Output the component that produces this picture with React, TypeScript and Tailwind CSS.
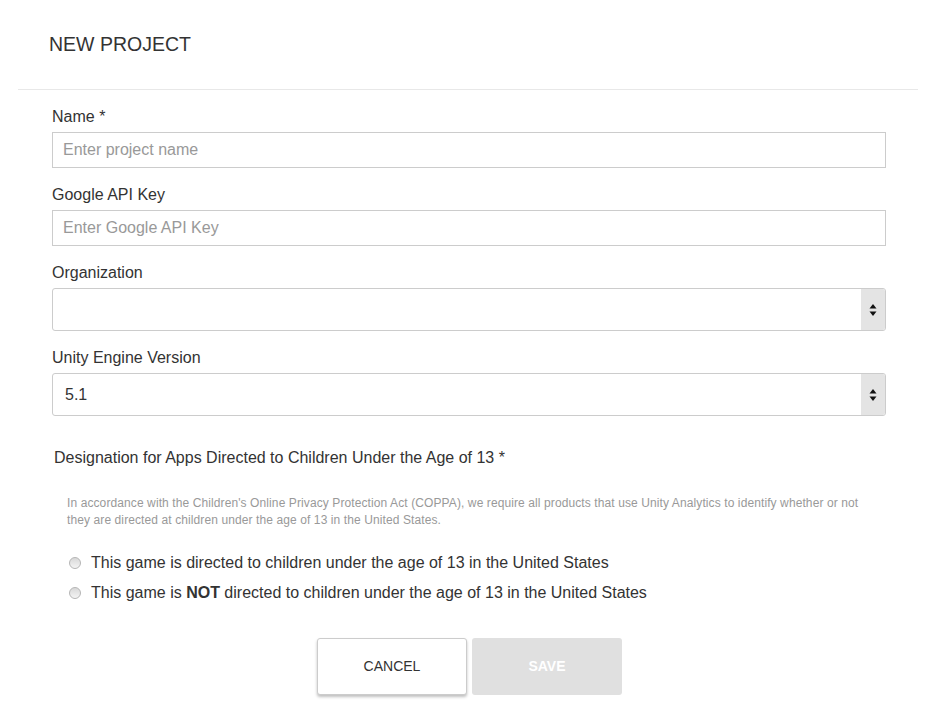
import React from "react";

function SelectBox({ value }: { value?: string }) {
  return (
    <div className="flex h-[43px] w-[834px] items-stretch rounded-[3px] border border-[#cccccc] bg-white">
      <div className="flex flex-1 items-center pl-[12px] text-[16px] text-[#333333]">{value}</div>
      <div className="flex w-[24px] items-center justify-center rounded-r-[2px] bg-[#e4e4e4]">
        <svg width="8" height="14" viewBox="0 0 8 14">
          <path d="M4 1 L7.5 5.5 H0.5 Z" fill="#111" />
          <path d="M4 13 L7.5 8.5 H0.5 Z" fill="#111" />
        </svg>
      </div>
    </div>
  );
}

function TextBox({ placeholder }: { placeholder: string }) {
  return (
    <div className="flex h-[36px] w-[834px] items-center border border-[#cccccc] bg-white pl-[10px] text-[16px] text-[#999999]">
      {placeholder}
    </div>
  );
}

function Radio({ children }: { children: React.ReactNode }) {
  return (
    <div className="flex h-[30px] items-center">
      <span className="ml-[69px] mr-[10px] h-[12px] w-[12px] rounded-full border border-[#b5b5b5] bg-gradient-to-b from-[#d8d8d8] to-[#f4f4f4]" />
      <span className="text-[16px] text-[#333333]">{children}</span>
    </div>
  );
}

export default function App() {
  return (
    <div className="min-h-[718px] w-[925px] bg-white" style={{ fontFamily: '"Liberation Sans", Arial, sans-serif' }}>
      <div className="flex h-[89px] items-center pl-[49px]">
        <h1 className="text-[19.5px] font-normal text-[#333333]">NEW PROJECT</h1>
      </div>
      <div className="ml-[18px] w-[900px] border-t border-[#e8e8e8]" />
      <div className="pl-[52px]">
        <div className="pt-[17px] text-[16px] leading-[20px] text-[#333333]">Name *</div>
        <div className="mt-[5px]"><TextBox placeholder="Enter project name" /></div>
        <div className="mt-[17px] text-[16px] leading-[20px] text-[#333333]">Google API Key</div>
        <div className="mt-[5px]"><TextBox placeholder="Enter Google API Key" /></div>
        <div className="mt-[17px] text-[16px] leading-[20px] text-[#333333]">Organization</div>
        <div className="mt-[5px]"><SelectBox /></div>
        <div className="mt-[17px] text-[16px] leading-[20px] text-[#333333]">Unity Engine Version</div>
        <div className="mt-[5px]"><SelectBox value="5.1" /></div>
      </div>
      <div className="pl-[54px] pt-[32px] text-[16px] leading-[20px] text-[#333333]">
        Designation for Apps Directed to Children Under the Age of 13 *
      </div>
      <div className="w-[880px] pl-[67px] pt-[27px] text-[12px] leading-[17px] tracking-[0.1px] text-[#999999]">
        In accordance with the Children's Online Privacy Protection Act (COPPA), we require all products that use Unity Analytics to identify whether or not they are directed at children under the age of 13 in the United States.
      </div>
      <div className="pt-[19px]">
        <Radio>This game is directed to children under the age of 13 in the United States</Radio>
        <Radio>
          This game is <b className="font-bold">NOT</b> directed to children under the age of 13 in the United States
        </Radio>
      </div>
      <div className="flex justify-center gap-[5px] pt-[30px] pl-[14px]">
        <button className="h-[57px] w-[150px] rounded-[3px] border border-[#cccccc] bg-white text-[14px] text-[#333333] shadow-[0_2px_3px_rgba(0,0,0,0.25)]">
          CANCEL
        </button>
        <button className="h-[57px] w-[150px] rounded-[3px] bg-[#e0e0e0] text-[14px] font-bold text-white">
          SAVE
        </button>
      </div>
    </div>
  );
}
